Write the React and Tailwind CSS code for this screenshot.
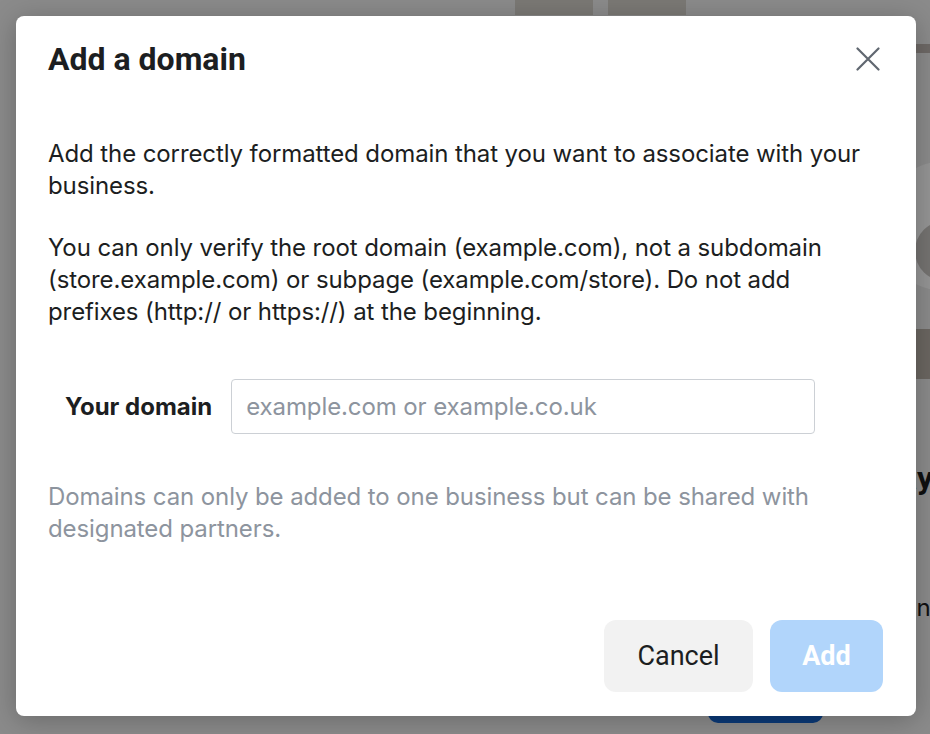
export default function App() {
  return (
    <div className="relative w-[930px] h-[734px] overflow-hidden bg-[#8b8b8b] font-['Inter',sans-serif]">
      {/* page behind the overlay */}
      <div className="h-full flex flex-col">
        <div className="flex gap-[15px] pl-[515px]">
          <div className="w-[78px] h-[15px] bg-[#7b7975]" />
          <div className="w-[78px] h-[15px] bg-[#7b7975]" />
        </div>
        <div className="flex-1 flex justify-end">
          <div className="w-[50px] flex flex-col whitespace-nowrap">
            <div className="mt-[29px] h-[9px] bg-[#6e6966]" />
            <div className="mt-[108px] w-[130px] h-[130px] shrink-0 rounded-full bg-[#959595] flex items-end justify-center pb-[10px]">
              <div className="w-[60px] h-[60px] rounded-full bg-[#757371]" />
            </div>
            <div className="mt-[38px] h-[50px] shrink-0 bg-[#6b6661]" />
            <div className="mt-[79px] ml-[20px] text-[32px] leading-[40px] font-bold text-[#101010] font-['Roboto',sans-serif]">
              ay
            </div>
            <div className="mt-[94px] ml-[22px] text-[24px] leading-[32px] text-[#101010]">on</div>
          </div>
        </div>
        <div className="ml-[708px] w-[115px] h-[11px] rounded-b-[10px] bg-[#0b3a78] mb-[11px]" />
      </div>

      {/* modal overlay */}
      <div className="absolute inset-0 p-[16px]">
        <div className="w-[900px] h-[700px] flex flex-col bg-white rounded-[8px] shadow-[0_4px_28px_rgba(0,0,0,0.25)]">
          <div className="h-[86px] flex items-center justify-between pl-[32px] pr-[36px]">
            <h1 className="text-[32px] font-bold text-[#1c1e21] leading-none font-['Roboto',sans-serif]">
              Add a domain
            </h1>
            <button className="w-[24px] h-[24px] text-[#606770]">
              <svg viewBox="0 0 24 24" width="24" height="24" fill="none" stroke="currentColor" strokeWidth="2.2" strokeLinecap="round">
                <path d="M1.5 1.5 L22.5 22.5 M22.5 1.5 L1.5 22.5" />
              </svg>
            </button>
          </div>

          <div className="pl-[32px] pr-[33px] pt-[36px] text-[24px] leading-[32px] text-[#1c1e21] tracking-[-0.1px]">
            <p>Add the correctly formatted domain that you want to associate with your business.</p>
            <p className="mt-[30px]">
              You can only verify the root domain (example.com), not a subdomain (store.example.com) or subpage
              (example.com/store). Do not add prefixes (http:// or https://) at the beginning.
            </p>

            <div className="mt-[51px] flex items-center gap-[19px] pl-[17px]">
              <label className="font-bold text-[#1c1e21] tracking-normal">Your domain</label>
              <input
                className="w-[584px] h-[55px] px-[14px] border border-[#ccd0d5] rounded-[4px] outline-none placeholder:text-[#8d949e]"
                placeholder="example.com or example.co.uk"
              />
            </div>

            <p className="mt-[47px] text-[#8d949e]">
              Domains can only be added to one business but can be shared with designated partners.
            </p>
          </div>

          <div className="mt-auto flex justify-end gap-[17px] px-[33px] pb-[24px] font-['Roboto',sans-serif] text-[27px]">
            <button className="w-[149px] h-[72px] rounded-[12px] bg-[#f2f2f2] text-[#1c1e21]">Cancel</button>
            <button className="w-[113px] h-[72px] rounded-[12px] bg-[#b1d5fb] text-white font-bold">Add</button>
          </div>
        </div>
      </div>
    </div>
  );
}
